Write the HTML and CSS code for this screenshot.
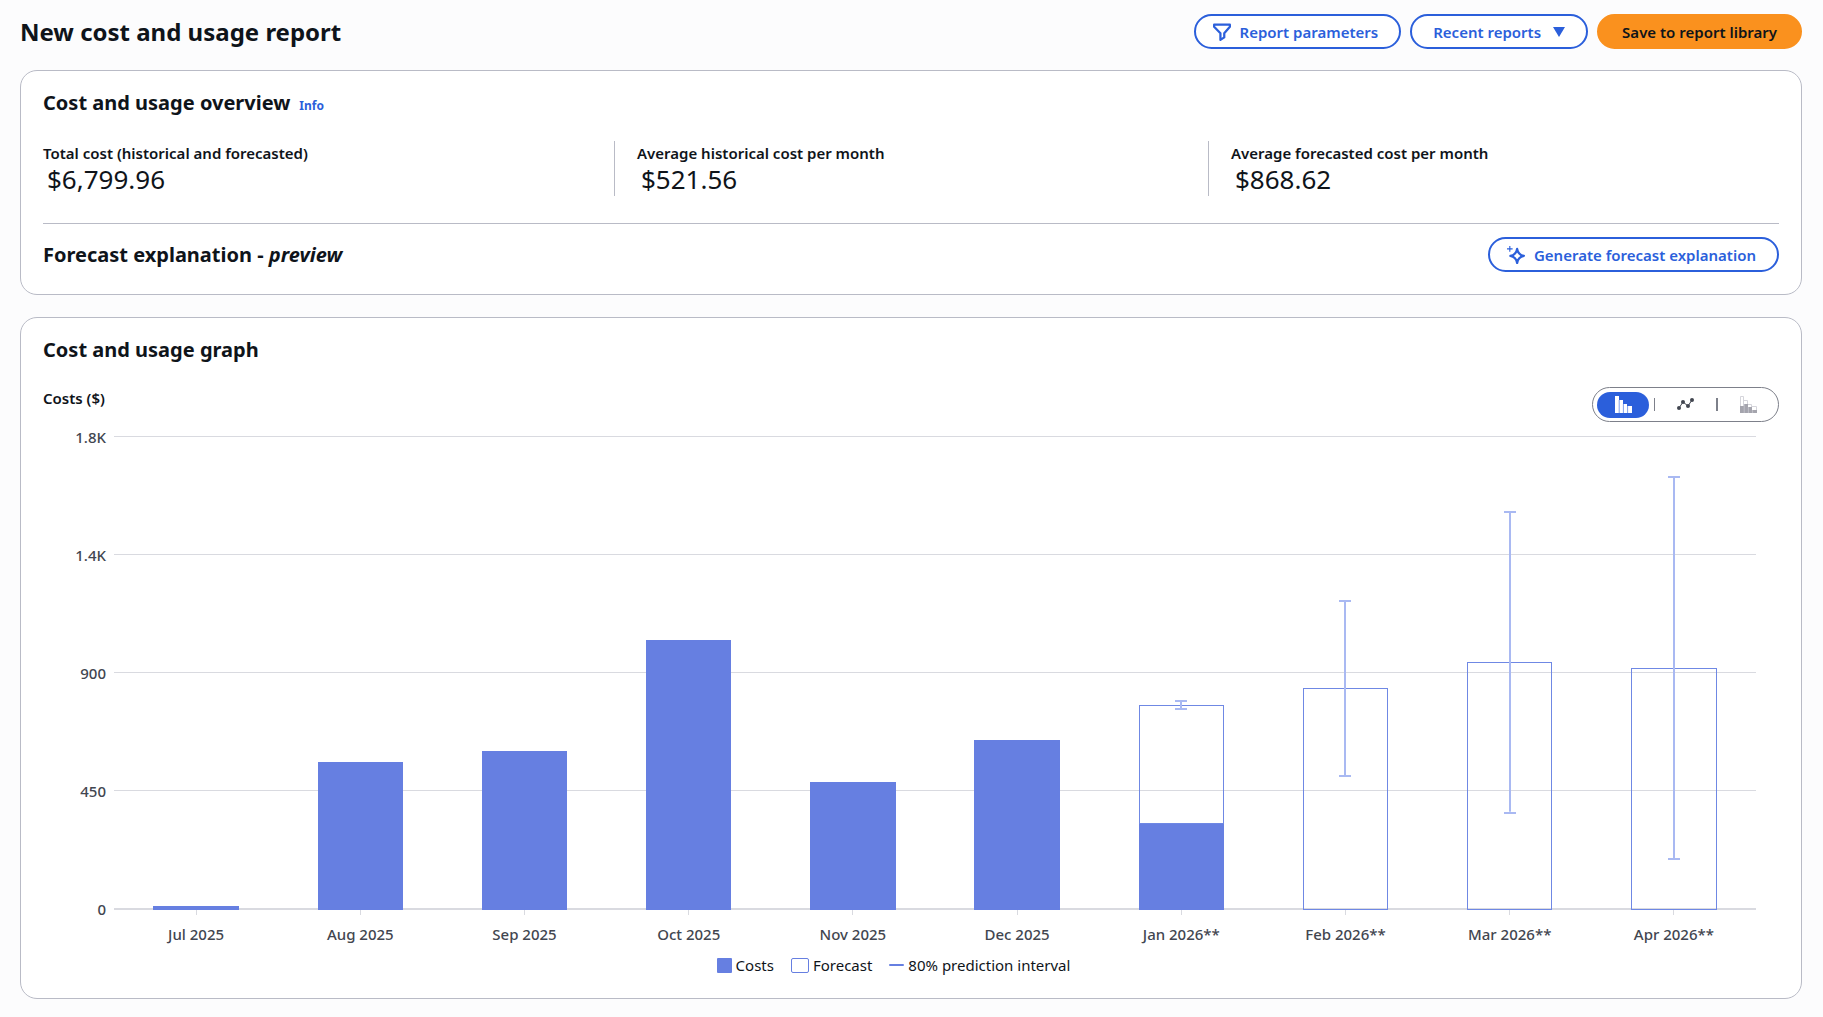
FILE: index.html
```html
<!DOCTYPE html>
<html lang="en">
<head>
    <meta charset="UTF-8">
    <meta name="viewport" content="width=device-width, initial-scale=1.0">
    <title>New cost and usage report</title>
    <link rel="stylesheet" href="styles.css">
</head>
<body>

    <header class="page-header">
        <h1>New cost and usage report</h1>
        <div class="actions">
            <button type="button" class="btn btn-icon">
                <svg class="icon" viewBox="0 0 16 16" aria-hidden="true"><path d="M1 1.500h14v1.800L10 9.200v3.600L6.600 15V9.200L1 3.300z"/></svg>
                Report parameters
            </button>
            <button type="button" class="btn">
                Recent reports
                <svg class="caret" viewBox="0 0 12 10" aria-hidden="true"><path d="M0 0h12L6 10z"/></svg>
            </button>
            <button type="button" class="btn btn-primary">Save to report library</button>
        </div>
    </header>

    <main>
        <section class="card">
            <div class="card-title">
                <h2>Cost and usage overview</h2>
                <a href="#" class="info">Info</a>
            </div>

            <dl class="metrics">
                <div class="metric">
                    <dt>Total cost (historical and forecasted)</dt>
                    <dd>$6,799.96</dd>
                </div>
                <div class="metric">
                    <dt>Average historical cost per month</dt>
                    <dd>$521.56</dd>
                </div>
                <div class="metric">
                    <dt>Average forecasted cost per month</dt>
                    <dd>$868.62</dd>
                </div>
            </dl>

            <div class="forecast">
                <h2>Forecast explanation - <em>preview</em></h2>
                <button type="button" class="btn btn-generate">
                    <svg class="icon" viewBox="0 0 16 16" aria-hidden="true"><path d="M9 2.500c.6 3.800 2 5.500 6 6.300-4 .8-5.400 2.500-6 6.300-.6-3.800-2-5.500-6-6.300 4-.8 5.400-2.500 6-6.300z"/><path class="thin" d="M2.500 0v5M0 2.500h5"/></svg>
                    Generate forecast explanation
                </button>
            </div>
        </section>

        <section class="card graph-card">
            <h2>Cost and usage graph</h2>

            <div class="graph-head">
                <h3>Costs ($)</h3>
                <div class="segmented" role="group" aria-label="Graph type">
                    <button type="button" class="segment selected" aria-label="Bar" aria-pressed="true">
                        <svg class="glyph" viewBox="0 0 17 17"><path fill="#fff" d="M0 0h4v4h4v4h4v2h5v7H0z"/><path stroke="#2b5fdb" stroke-width=".6" d="M4.200 4v13M8.400 8v9M12.600 10v7"/></svg>
                    </button>
                    <span class="divider"></span>
                    <button type="button" class="segment" aria-label="Line" aria-pressed="false">
                        <svg class="glyph" viewBox="0 0 17 17"><path fill="none" stroke="#424650" d="M2 12l4-6 5 4 4-6"/><g fill="#424650"><circle cx="2" cy="12" r="2"/><circle cx="6" cy="6" r="2"/><circle cx="11" cy="10" r="2"/><circle cx="15" cy="4" r="2"/></g></svg>
                    </button>
                    <span class="divider thick"></span>
                    <button type="button" class="segment" aria-label="Stack" aria-pressed="false">
                        <svg class="glyph" viewBox="0 0 17 17"><path fill="none" stroke="#d5d5db" d="M.5 17V.5h3V17M3.500 4.500h4V17M7.500 8.500h4V17M11.500 10.500h5V17"/><path fill="#a4a4ad" d="M0 10h4V8h4v3h4v3h5v3H0z"/><path stroke="#d5d5db" stroke-width=".6" d="M4.200 8v9M8.400 11v6M12.600 14v3"/></svg>
                    </button>
                </div>
            </div>

            <div class="chart">
                <div class="y-axis">
                    <span>1.8K</span>
                    <span>1.4K</span>
                    <span>900</span>
                    <span>450</span>
                    <span>0</span>
                </div>
                <div class="plot">
                    <div class="gridlines"><i></i><i></i><i></i><i></i><i></i></div>
                    <div class="columns">
                        <div class="column"><div class="bar" style="height: 0.8%"></div></div>
                        <div class="column"><div class="bar" style="height: 31.2%"></div></div>
                        <div class="column"><div class="bar" style="height: 33.5%"></div></div>
                        <div class="column"><div class="bar" style="height: 57%"></div></div>
                        <div class="column"><div class="bar" style="height: 27%"></div></div>
                        <div class="column"><div class="bar" style="height: 35.8%"></div></div>
                        <div class="column">
                            <div class="bar projected" style="height: 25.1%"></div>
                            <div class="bar" style="height: 18.2%"></div>
                            <div class="interval" style="bottom: 42.1%; height: 2.2%"></div>
                        </div>
                        <div class="column">
                            <div class="bar projected" style="height: 46.9%"></div>
                            <div class="interval" style="bottom: 28.1%; height: 37.4%"></div>
                        </div>
                        <div class="column">
                            <div class="bar projected" style="height: 52.4%"></div>
                            <div class="interval" style="bottom: 20.3%; height: 63.8%"></div>
                        </div>
                        <div class="column">
                            <div class="bar projected" style="height: 51.1%"></div>
                            <div class="interval" style="bottom: 10.5%; height: 81%"></div>
                        </div>
                    </div>
                </div>
                <div class="x-axis">
                    <span>Jul 2025</span>
                    <span>Aug 2025</span>
                    <span>Sep 2025</span>
                    <span>Oct 2025</span>
                    <span>Nov 2025</span>
                    <span>Dec 2025</span>
                    <span>Jan 2026**</span>
                    <span>Feb 2026**</span>
                    <span>Mar 2026**</span>
                    <span>Apr 2026**</span>
                </div>
            </div>

            <ul class="legend">
                <li><span class="swatch"></span>Costs</li>
                <li><span class="swatch outline"></span>Forecast</li>
                <li><span class="swatch line"></span>80% prediction interval</li>
            </ul>
        </section>
    </main>

</body>
</html>
```
FILE: styles.css
```css
* {
    box-sizing: border-box;
}

body {
    margin: 0;
    padding: 14px 21px 18px 20px;
    background-color: #fcfcfd;
    color: #0f141a;
    font-family: "Noto Sans", "Open Sans", sans-serif;
    font-size: 15px;
    line-height: 22px;
}

h1, h2, h3, dl, dd, ul {
    margin: 0;
    padding: 0;
}

h1 {
    font-size: 24px;
    line-height: 35px;
}

h2 {
    font-size: 20px;
    line-height: 26px;
}

h3 {
    font-size: 15px;
    font-weight: 600;
    line-height: 22px;
}

.page-header {
    display: flex;
    justify-content: space-between;
    align-items: center;
    margin-bottom: 21px;
}

.actions {
    display: flex;
    gap: 9px;
}

/* Buttons */
.btn {
    display: flex;
    align-items: center;
    gap: 12px;
    height: 35px;
    padding: 0 21px;
    border: 2px solid #2b5fdb;
    border-radius: 18px;
    background: #fff;
    color: #2b5fdb;
    font-family: inherit;
    font-size: 15px;
    font-weight: 600;
    white-space: nowrap;
    cursor: pointer;
}

.btn-icon {
    gap: 9px;
    padding-left: 17px;
}

.btn-generate {
    gap: 9px;
    padding-left: 17px;
    padding-right: 21px;
}

.btn-primary {
    padding: 0 23px;
    border-color: #fa911e;
    background: #fa911e;
    color: #0f141a;
}

.icon {
    width: 18px;
    height: 18px;
    fill: none;
    stroke: #2b5fdb;
    stroke-width: 2;
    stroke-linejoin: round;
}

.icon .thin {
    stroke-width: 1;
}

.caret {
    width: 12px;
    height: 10px;
    fill: #2b5fdb;
}

/* Cards */
.card {
    margin-bottom: 22px;
    padding: 19px 22px 22px;
    border: 1px solid #b9bbc6;
    border-radius: 17px;
    background: #fff;
}

.card:last-child {
    margin-bottom: 0;
}

.card-title {
    display: flex;
    align-items: baseline;
    gap: 9px;
    margin-bottom: 24px;
}

.info {
    color: #2b5fdb;
    font-size: 12px;
    font-weight: bold;
    text-decoration: none;
}

.metrics {
    display: flex;
    gap: 23px;
    padding-bottom: 27px;
    border-bottom: 1px solid #b9bbc6;
}

.metric {
    flex: 1 1 0;
    height: 55px;
}

.metric + .metric {
    padding-left: 22px;
    border-left: 1px solid #b9bbc6;
}

.metric dt {
    font-size: 15px;
    font-weight: 600;
    line-height: 24px;
}

.metric dd {
    padding-left: 4px;
    font-size: 26px;
    line-height: 28px;
}

.forecast {
    display: flex;
    justify-content: space-between;
    align-items: center;
    padding-top: 13px;
}

/* Graph */
.graph-head {
    display: flex;
    justify-content: space-between;
    margin-top: 24px;
    margin-bottom: 14px;
}

.segmented {
    display: flex;
    align-items: center;
    height: 35px;
    padding: 0 4px;
    border: 1px solid #7d808a;
    border-radius: 18px;
}

.segment {
    display: flex;
    align-items: center;
    justify-content: center;
    width: 52px;
    height: 26px;
    padding: 0;
    border: none;
    border-radius: 13px;
    background: none;
    cursor: pointer;
}

.segment.selected {
    background: #2b5fdb;
}

.glyph {
    width: 17px;
    height: 17px;
}

.divider {
    width: 1px;
    height: 13px;
    margin: 0 4px 0 5px;
    background: #7d808a;
}

.divider.thick {
    width: 2px;
}

.chart {
    display: grid;
    grid-template-columns: 63px 1fr;
    column-gap: 8px;
    padding-right: 23px;
}

.y-axis {
    display: flex;
    flex-direction: column;
    justify-content: space-between;
    margin: -10px 0;
    color: #424650;
    font-weight: 500;
    text-align: right;
}

.plot {
    position: relative;
    height: 474px;
}

.gridlines {
    position: absolute;
    inset: 0;
    display: flex;
    flex-direction: column;
    justify-content: space-between;
}

.gridlines i {
    height: 1px;
    background: #d9dae0;
}

.gridlines i:last-child {
    height: 2px;
}

.columns {
    position: relative;
    display: grid;
    grid-template-columns: repeat(10, 1fr);
    height: 100%;
}

.column {
    position: relative;
    display: flex;
    flex-direction: column;
    justify-content: flex-end;
    align-items: center;
}

.bar {
    width: 52%;
    background: #667fe1;
}

.bar.projected {
    border: 1px solid #6f88e4;
    background: none;
}

.interval {
    position: absolute;
    left: 50%;
    width: 12px;
    margin-left: -6px;
    border: solid #a9b9f2;
    border-width: 2px 0;
    background: linear-gradient(#a9b9f2, #a9b9f2) center / 2px 100% no-repeat;
}

.x-axis {
    grid-column: 2;
    display: grid;
    grid-template-columns: repeat(10, 1fr);
    color: #424650;
    font-weight: 500;
    text-align: center;
}

.x-axis span::before {
    content: "";
    display: block;
    width: 1px;
    height: 5px;
    margin: 0 auto 8px;
    background: #d9dae0;
}

.legend {
    display: flex;
    justify-content: center;
    gap: 17px;
    margin-top: 9px;
    padding-right: 35px;
    list-style: none;
}

.legend li {
    display: flex;
    align-items: center;
    gap: 4px;
}

.swatch {
    width: 15px;
    height: 15px;
    border-radius: 1px;
    background: #667fe1;
}

.swatch.outline {
    width: 18px;
    border: 1px solid #667fe1;
    border-radius: 2px;
    background: #fff;
}

.swatch.line {
    height: 2px;
}
```
